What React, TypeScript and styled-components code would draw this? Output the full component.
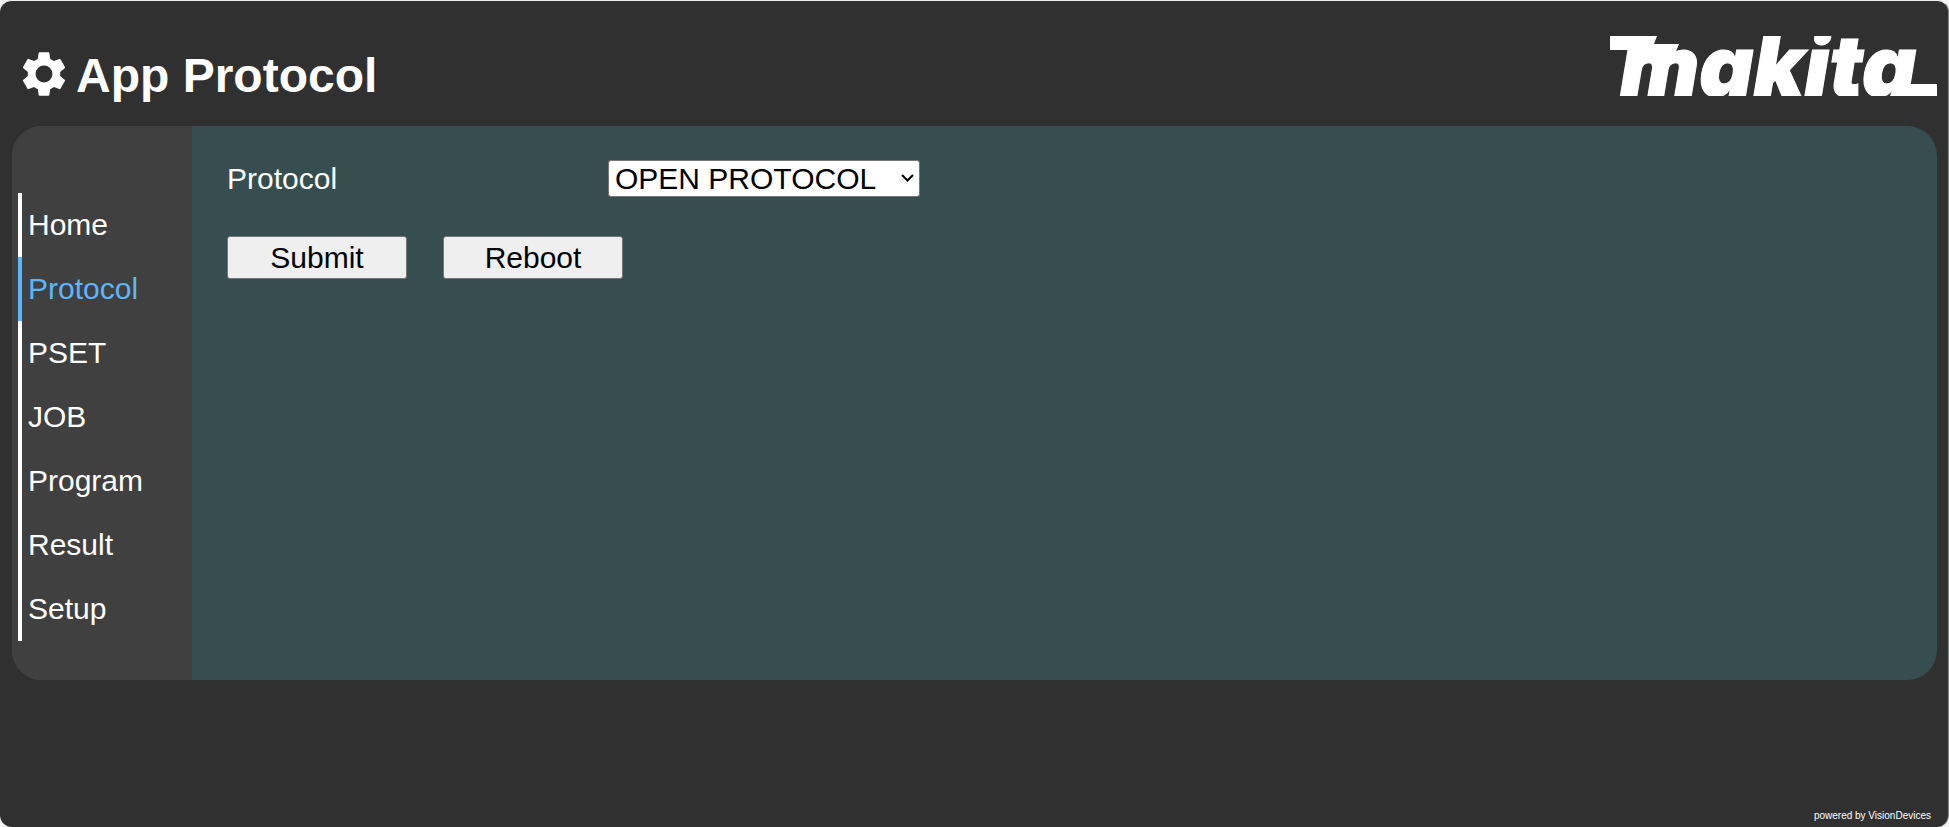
import React, { useState } from "react";
import styled, { createGlobalStyle } from "styled-components";

const GlobalStyle = createGlobalStyle`
  *, *::before, *::after { box-sizing: border-box; }
  body {
    margin: 0;
    background: #f4f4f4;
    color: #fff;
    font-family: "Liberation Sans", Arial, sans-serif;
    font-size: 30px;
  }
`;

const Page = styled.div`
  display: flex;
  flex-direction: column;
  min-height: 100vh;
  padding: 0 11px 0 12px;
  background: #303030;
  border-top: 1px solid #eceeed;
  border-right: 1px solid #8a8a8a;
  border-radius: 12px;
`;

const Header = styled.header`
  display: flex;
  justify-content: space-between;
  align-items: flex-start;
  height: 125px;
  padding: 15px 0 0 6px;
`;

const Brand = styled.div`
  display: flex;
  align-items: flex-start;
  gap: 6px;
  padding-top: 32px;
`;

const Title = styled.h1`
  margin: 0;
  font-size: 48px;
  line-height: 56px;
`;

const Panel = styled.div`
  display: flex;
  min-height: 554px;
  overflow: hidden;
  border-radius: 30px;
  background: #364e50;
`;

const Sidebar = styled.nav`
  flex: 0 0 180px;
  padding: 67px 6px 39px;
  background: #404040;
`;

const NavItem = styled.a<{ $active?: boolean }>`
  display: block;
  padding-left: 6px;
  border-left: 4px solid;
  color: ${(p) => (p.$active ? "#5bb5ff" : "#fff")};
  line-height: 64px;
  text-decoration: none;
`;

const Content = styled.main`
  flex: 1;
  padding: 34px 35px;
`;

const Field = styled.div`
  display: flex;
  align-items: center;
  height: 37px;
`;

const Label = styled.label`
  width: 381px;
`;

const SelectBox = styled.div`
  position: relative;
  width: 312px;
  height: 37px;

  svg {
    position: absolute;
    top: 14px;
    right: 6px;
    pointer-events: none;
  }
`;

const Select = styled.select`
  appearance: none;
  display: block;
  width: 100%;
  height: 100%;
  padding: 0 24px 0 6px;
  border: 1px solid #767676;
  border-radius: 3px;
  background-color: #fff;
  color: #000;
  font: inherit;
`;

const Actions = styled.div`
  display: flex;
  gap: 36px;
  margin-top: 39px;
`;

const Button = styled.button`
  width: 180px;
  height: 43px;
  padding: 0;
  border: 1px solid #767676;
  border-radius: 3px;
  background: #efefef;
  color: #000;
  font: inherit;
`;

const Footer = styled.footer`
  margin-top: auto;
  padding: 0 6px 4px;
  font-size: 10px;
  line-height: 14px;
  text-align: right;
`;

const GearIcon = () => (
  <svg width="52" height="52" viewBox="0 0 24 24" fill="#fff" aria-hidden="true">
    <path
      fillRule="evenodd"
      d="M19.43 12.98c.04-.32.07-.64.07-.98s-.03-.66-.07-.98l2.11-1.65c.19-.15.24-.42.12-.64l-2-3.46c-.12-.22-.39-.3-.61-.22l-2.49 1c-.52-.4-1.08-.73-1.69-.98l-.38-2.65A.49.49 0 0 0 14 2h-4c-.25 0-.46.18-.49.42l-.38 2.65c-.61.25-1.17.59-1.69.98l-2.49-1c-.23-.09-.49 0-.61.22l-2 3.46c-.13.22-.07.49.12.64l2.11 1.65c-.04.32-.07.65-.07.98s.03.66.07.98l-2.11 1.65c-.19.15-.24.42-.12.64l2 3.46c.12.22.39.3.61.22l2.49-1c.52.4 1.08.73 1.69.98l.38 2.65c.03.24.24.42.49.42h4c.25 0 .46-.18.49-.42l.38-2.65c.61-.25 1.17-.59 1.69-.98l2.49 1c.23.09.49 0 .61-.22l2-3.46c.12-.22.07-.49-.12-.64zM12 15.9a3.9 3.9 0 1 1 0-7.8 3.9 3.9 0 0 1 0 7.8z"
    />
  </svg>
);

const ChevronIcon = () => (
  <svg width="13" height="9" viewBox="0 0 13 9" fill="none" stroke="#000" strokeWidth="2" aria-hidden="true">
    <path d="M1 1L6.500 6.500L12 1" />
  </svg>
);

const Logo = () => (
  <svg width="327" height="104" viewBox="0 -20 327 104" fill="#fff" role="img" aria-label="Makita">
    <clipPath id="logo-band">
      <rect width="327" height="60" />
    </clipPath>
    <g clipPath="url(#logo-band)">
      <path d="M0 0H47L44 8H69L62 25H24L27 14H0z" />
      <text
        x="10"
        y="60"
        fontFamily="Inter, 'Liberation Sans', sans-serif"
        fontSize="84"
        fontWeight="900"
        fontStyle="italic"
        stroke="#fff"
        strokeWidth="1"
      >
        makita
      </text>
      <path d="M284 48H327V60H280z" />
    </g>
  </svg>
);

const pages = ["Home", "Protocol", "PSET", "JOB", "Program", "Result", "Setup"];

export default function App() {
  const [active, setActive] = useState("Protocol");
  return (
    <>
      <GlobalStyle />
      <Page>
        <Header>
          <Brand>
            <GearIcon />
            <Title>App Protocol</Title>
          </Brand>
          <Logo />
        </Header>
        <Panel>
          <Sidebar>
            {pages.map((name) => (
              <NavItem
                key={name}
                href={"#" + name.toLowerCase()}
                $active={name === active}
                aria-current={name === active ? "page" : undefined}
                onClick={() => setActive(name)}
              >
                {name}
              </NavItem>
            ))}
          </Sidebar>
          <Content>
            <Field>
              <Label htmlFor="protocol">Protocol</Label>
              <SelectBox>
                <Select id="protocol">
                  <option>OPEN PROTOCOL</option>
                </Select>
                <ChevronIcon />
              </SelectBox>
            </Field>
            <Actions>
              <Button type="button">Submit</Button>
              <Button type="button">Reboot</Button>
            </Actions>
          </Content>
        </Panel>
        <Footer>powered by VisionDevices</Footer>
      </Page>
    </>
  );
}
